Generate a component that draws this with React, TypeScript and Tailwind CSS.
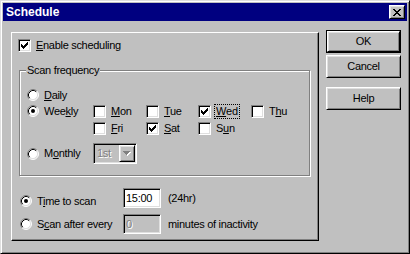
const raised =
  "border border-t-white border-l-white border-r-black border-b-black shadow-[inset_1px_1px_0_#dfdfdf,inset_-1px_-1px_0_#808080]";
const sunken =
  "border border-t-[#808080] border-l-[#808080] border-r-white border-b-white shadow-[inset_1px_1px_0_#000,inset_-1px_-1px_0_#dfdfdf]";
const disabledText = "text-[#808080] [text-shadow:1px_1px_0_#fff]";

const CHECK =
  "M6 0h1v1h-1z M5 1h2v1h-2z M0 2h1v1h-1z M4 2h3v1h-3z M0 3h2v1h-2z M3 3h3v1h-3z M0 4h5v1h-5z M1 5h3v1h-3z M2 6h1v1h-1z";
const CLOSE =
  "M0 0h2v1h-2z M6 0h2v1h-2z M1 1h2v1h-2z M5 1h2v1h-2z M2 2h4v1h-4z M3 3h2v1h-2z M2 4h4v1h-4z M1 5h2v1h-2z M5 5h2v1h-2z M0 6h2v1h-2z M6 6h2v1h-2z";
const ARROW = "M0 0h7v1h-7z M1 1h5v1h-5z M2 2h3v1h-3z M3 3h1v1h-1z";

function Check({ checked }: { checked?: boolean }) {
  return (
    <span className={`w-[13px] h-[13px] shrink-0 bg-white ${sunken} flex items-center justify-center`}>
      {checked && (
        <svg width="7" height="7" viewBox="0 0 7 7" shapeRendering="crispEdges">
          <path d={CHECK} fill="#000" />
        </svg>
      )}
    </span>
  );
}

function Radio({ checked }: { checked?: boolean }) {
  return (
    <svg width="12" height="12" viewBox="0 0 12 12" className="shrink-0">
      <circle cx="6" cy="6" r="5" fill="#fff" />
      <path d="M2.11 9.89 A5.5 5.5 0 0 1 9.89 2.11" stroke="#808080" fill="none" />
      <path d="M9.89 2.11 A5.5 5.5 0 0 1 2.11 9.89" stroke="#fff" fill="none" />
      <path d="M2.82 9.18 A4.5 4.5 0 0 1 9.18 2.82" stroke="#000" fill="none" />
      <path d="M9.18 2.82 A4.5 4.5 0 0 1 2.82 9.18" stroke="#dfdfdf" fill="none" />
      {checked && <circle cx="6" cy="6" r="2" fill="#000" />}
    </svg>
  );
}

function Day({ label, checked, focus }: { label: React.ReactNode; checked?: boolean; focus?: boolean }) {
  return (
    <div className="h-[16px] flex items-center">
      <Check checked={checked} />
      {focus ? (
        <span className="ml-[3px] h-[15px] px-[1px] border border-dotted border-black flex items-center">{label}</span>
      ) : (
        <span className="ml-[5px]">{label}</span>
      )}
    </div>
  );
}

export default function App() {
  return (
    <div className="w-[410px] h-[254px] bg-[#c0c0c0] border border-t-[#dfdfdf] border-l-[#dfdfdf] border-r-black border-b-black shadow-[inset_1px_1px_0_#fff,inset_-1px_-1px_0_#808080] p-[2px] text-[11px] tracking-[-0.3px] text-black font-['Liberation_Sans',Arial,sans-serif] flex flex-col leading-none">
      {/* title bar */}
      <div className="h-[18px] shrink-0 bg-[#000080] flex items-center pl-[3px] pr-[2px]">
        <span className="text-white font-bold text-[12px] tracking-normal">Schedule</span>
        <div className={`ml-auto w-[16px] h-[14px] bg-[#c0c0c0] ${raised} flex items-center justify-center`}>
          <svg width="8" height="7" viewBox="0 0 8 7" shapeRendering="crispEdges">
            <path d={CLOSE} fill="#000" />
          </svg>
        </div>
      </div>

      <div className="flex mt-[9px] ml-[8px]">
        {/* main panel */}
        <div className="mt-[2px] w-[308px] h-[209px] border border-t-white border-l-white border-r-black border-b-black shadow-[inset_-1px_-1px_0_#808080] flex flex-col">
          <div className="ml-[6px] mt-[6px] h-[13px] flex items-center">
            <Check checked />
            <span className="ml-[5px]">
              <u>E</u>nable scheduling
            </span>
          </div>

          <div className="relative ml-[7px] mt-[18px] w-[291px] h-[106px] shrink-0 border border-[#808080] shadow-[inset_1px_1px_0_#fff,1px_1px_0_#fff] pt-[16px]">
            <span className="absolute left-[6px] -top-[7px] h-[13px] px-[1px] bg-[#c0c0c0] flex items-center">
              Scan frequency
            </span>

            <div className="h-[16px] ml-[7px] flex items-center">
              <Radio />
              <span className="ml-[5px]">
                <u>D</u>aily
              </span>
            </div>

            <div className="flex ml-[7px]">
              <div className="w-[66px] h-[16px] flex items-center">
                <Radio checked />
                <span className="ml-[5px]">
                  Wee<u>k</u>ly
                </span>
              </div>
              <div className="grid grid-cols-[53px_52px_53px_auto] gap-y-[1px]">
                <Day label={<><u>M</u>on</>} />
                <Day label={<><u>T</u>ue</>} />
                <Day label={<><u>W</u>ed</>} checked focus />
                <Day label={<>T<u>h</u>u</>} />
                <Day label={<><u>F</u>ri</>} />
                <Day label={<><u>S</u>at</>} checked />
                <Day label={<>S<u>u</u>n</>} />
              </div>
            </div>

            <div className="flex items-center ml-[7px] mt-[7px] h-[21px]">
              <div className="w-[66px] flex items-center">
                <Radio />
                <span className="ml-[5px]">
                  M<u>o</u>nthly
                </span>
              </div>
              <div className={`w-[44px] h-[21px] ${sunken} p-[1px] flex items-center`}>
                <span className={`flex-1 pl-[2px] ${disabledText}`}>1st</span>
                <div className={`w-[16px] h-[17px] bg-[#c0c0c0] ${raised} flex items-center justify-center`}>
                  <svg width="8" height="5" viewBox="0 0 8 5" shapeRendering="crispEdges">
                    <path d={ARROW} fill="#fff" transform="translate(1 1)" />
                    <path d={ARROW} fill="#808080" />
                  </svg>
                </div>
              </div>
            </div>
          </div>

          {/* time rows */}
          <div className="flex ml-[8px] mt-[12px] h-[20px] items-start">
            <div className="w-[103px] h-[20px] mt-[3px] flex items-center">
              <Radio checked />
              <span className="ml-[5px]">
                T<u>i</u>me to scan
              </span>
            </div>
            <div className={`w-[38px] h-[20px] bg-white ${sunken} pl-[2px] flex items-center`}>15:00</div>
            <span className="ml-[7px] h-[20px] flex items-center">(24hr)</span>
          </div>

          <div className="flex ml-[8px] mt-[6px] h-[20px] items-center">
            <div className="w-[103px] flex items-center">
              <Radio />
              <span className="ml-[5px]">
                S<u>c</u>an after every
              </span>
            </div>
            <div className={`w-[38px] h-[20px] bg-[#c0c0c0] ${sunken} pl-[2px] flex items-center ${disabledText}`}>0</div>
            <span className="ml-[7px]">minutes of inactivity</span>
          </div>
        </div>

        {/* buttons */}
        <div className="ml-[7px] w-[75px] flex flex-col">
          <div className="h-[23px] border border-black flex">
            <div className={`flex-1 ${raised} flex items-center justify-center`}>OK</div>
          </div>
          <div className={`mt-[2px] h-[23px] ${raised} flex items-center justify-center`}>Cancel</div>
          <div className={`mt-[9px] h-[23px] ${raised} flex items-center justify-center`}>Help</div>
        </div>
      </div>
    </div>
  );
}
